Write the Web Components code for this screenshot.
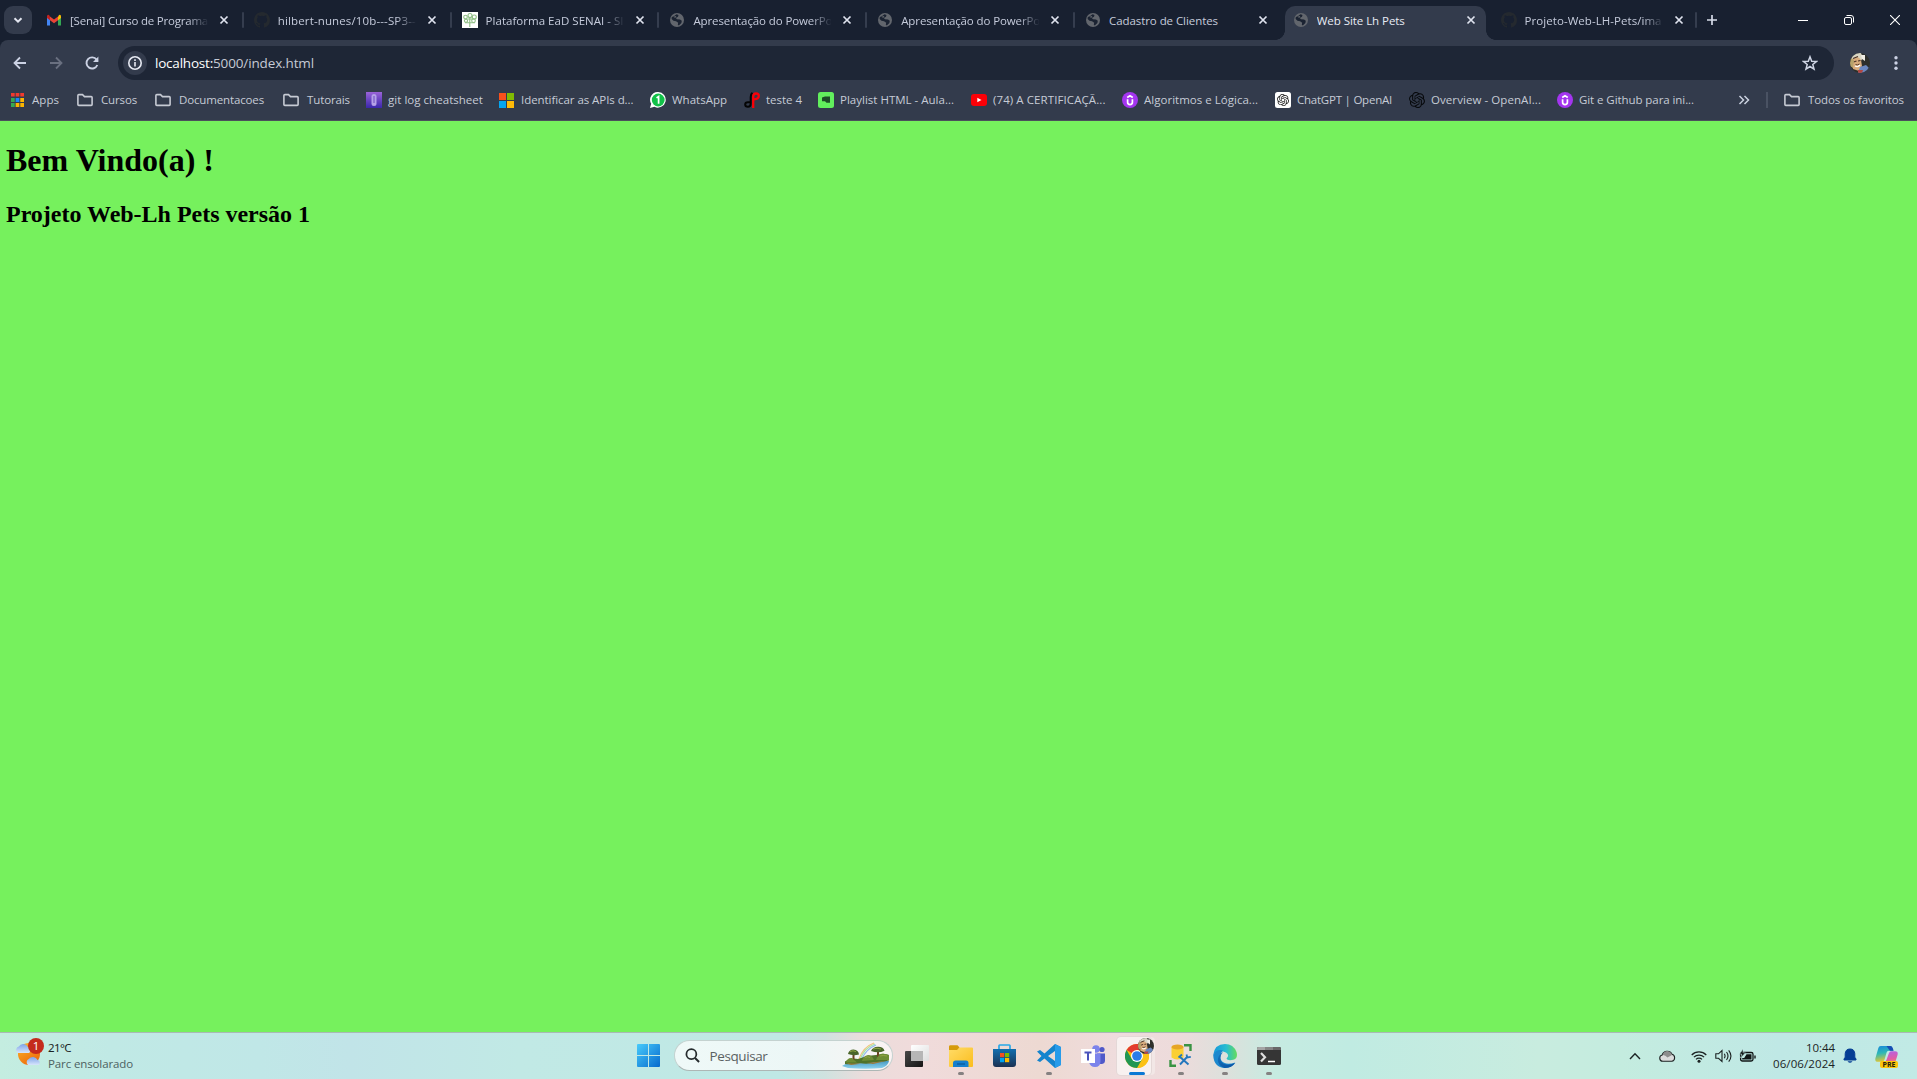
<!DOCTYPE html>
<html lang="pt-BR">
<head>
<meta charset="utf-8">
<title>Web Site Lh Pets</title>
<style>
html,body{margin:0;height:100%;overflow:hidden}
</style>
</head>
<body>
<desktop-screen></desktop-screen>
<script>
const KNOT = 'M22.2819 9.8211a5.9847 5.9847 0 0 0-.5157-4.9108 6.0462 6.0462 0 0 0-6.5098-2.9A6.0651 6.0651 0 0 0 4.9807 4.1818a5.9847 5.9847 0 0 0-3.9977 2.9 6.0462 6.0462 0 0 0 .7427 7.0966 5.98 5.98 0 0 0 .511 4.9107 6.051 6.051 0 0 0 6.5146 2.9001A5.9847 5.9847 0 0 0 13.2599 24a6.0557 6.0557 0 0 0 5.7718-4.2058 5.9894 5.9894 0 0 0 3.9977-2.9001 6.0557 6.0557 0 0 0-.7475-7.0729zm-9.022 12.6081a4.4755 4.4755 0 0 1-2.8764-1.0408l.1419-.0804 4.7783-2.7582a.7948.7948 0 0 0 .3927-.6813v-6.7369l2.02 1.1686a.071.071 0 0 1 .038.052v5.5826a4.504 4.504 0 0 1-4.4945 4.4944zm-9.6607-4.1254a4.4708 4.4708 0 0 1-.5346-3.0137l.142.0852 4.783 2.7582a.7712.7712 0 0 0 .7806 0l5.8428-3.3685v2.3324a.0804.0804 0 0 1-.0332.0615L9.74 19.9502a4.4992 4.4992 0 0 1-6.1408-1.6464zM2.3408 7.8956a4.485 4.485 0 0 1 2.3655-1.9728V11.6a.7664.7664 0 0 0 .3879.6765l5.8144 3.3543-2.0201 1.1685a.0757.0757 0 0 1-.071 0l-4.8303-2.7865A4.504 4.504 0 0 1 2.3408 7.872zm16.5963 3.8558L13.1038 8.364 15.1192 7.2a.0757.0757 0 0 1 .071 0l4.8303 2.7913a4.4944 4.4944 0 0 1-.6765 8.1042v-5.6772a.79.79 0 0 0-.407-.667zm2.0107-3.0231l-.142-.0852-4.7735-2.7818a.7759.7759 0 0 0-.7854 0L9.409 9.2297V6.8974a.0662.0662 0 0 1 .0284-.0615l4.8303-2.7866a4.4992 4.4992 0 0 1 6.6802 4.66zM8.3065 12.863l-2.02-1.1638a.0804.0804 0 0 1-.038-.0567V6.0742a4.4992 4.4992 0 0 1 7.3757-3.4537l-.142.0805L8.704 5.459a.7948.7948 0 0 0-.3927.6813zm1.0976-2.3654l2.602-1.4998 2.6069 1.4998v2.9994l-2.5974 1.4997-2.6067-1.4997Z';
const ICONS = {
  chevdown: ['0 0 16 16','<path d="M4.5 6.3 8 9.7l3.5-3.4" fill="none" stroke="#e3e6f0" stroke-width="2"/>'],
  gmail: ['0 0 16 16','<path d="M1 4v9.5h3V7z" fill="#4285f4"/><path d="M15 4v9.5h-3V7z" fill="#34a853"/><path d="M12 4.8 13 3q2-.8 2 1.6V6l-3 2.3z" fill="#fbbc04"/><path d="M4 8.3V4.4l4 3 4-3v3.9l-4 3z" fill="#ea4335"/><path d="M1 6V4.6Q1 2.200 3 3l1 1.500V8.300z" fill="#c5221f"/>'],
  github: ['0 0 16 16','<path fill="#24292f" d="M8 0C3.580 0 0 3.580 0 8c0 3.540 2.290 6.530 5.470 7.590.4.070.55-.170.55-.380v-1.490c-2.010.370-2.530-.490-2.690-.940-.09-.230-.480-.940-.820-1.130-.28-.150-.680-.520-.010-.530.63-.010 1.080.58 1.230.82.720 1.210 1.870.870 2.330.660.070-.520.280-.870.510-1.070-1.780-.2-3.640-.890-3.640-3.950 0-.870.310-1.590.820-2.150-.08-.2-.36-1.020.080-2.120 0 0 .67-.210 2.200.820a7.600 7.600 0 0 1 4 0c1.530-1.040 2.200-.820 2.200-.820.440 1.100.160 1.920.080 2.120.510.560.820 1.270.820 2.150 0 3.070-1.870 3.750-3.650 3.950.290.250.540.730.540 1.480v2.200c0 .210.150.460.550.380A8 8 0 0 0 16 8c0-4.420-3.580-8-8-8"/>'],
  senai: ['0 0 16 16','<path fill="#fff" d="M0 0h16v16H0z"/><g fill="none" stroke="#8fbf86" stroke-width="1.100"><circle cx="3.500" cy="5" r="1.800"/><circle cx="8" cy="3.500" r="2"/><circle cx="12.300" cy="5" r="2"/><circle cx="4" cy="8.800" r="1.600"/><circle cx="11.500" cy="8.700" r="1.800"/><path d="M7.800 5v10M3 10.800h10M5.500 7h5"/></g>'],
  globe: ['0 0 16 16','<circle cx="8" cy="8" r="7" fill="#62666d"/><path d="M7.600 2.300 9.500 3 9 4.700 6.800 6 8 7.200l3 .3 1.800 1.300-.4 2.200-2.600 2.600-1-.8.4-2.100L7 9.300 4.500 8.800 2.600 7 2.800 5l1.600-.5z" fill="#1b2332"/><path d="M5 4.600 6.800 4l.5 1-1.500 1z" fill="#62666d"/>'],
  close: ['0 0 10 10','<path d="M1.500 1.500l7 7M8.500 1.500l-7 7" stroke="#dfe3ee" stroke-width="1.700"/>'],
  plus: ['0 0 12 12','<path d="M6 1v10M1 6h10" stroke="#d6dbe8" stroke-width="1.700"/>'],
  min: ['0 0 10 10','<path d="M0 5.500h10" stroke="#fff"/>'],
  restore: ['0 0 10 10','<rect x=".5" y="2.500" width="7" height="7" rx="1.500" fill="none" stroke="#fff"/><path d="M2.500.5h4.500a2.500 2.500 0 0 1 2.500 2.500v4.500" fill="none" stroke="#fff"/>'],
  winclose: ['0 0 10 10','<path d="M0 0l10 10M10 0 0 10" stroke="#fff" stroke-width="1.100"/>'],
  back: ['0 0 16 16','<path d="M14 8H3M8 2.500 2.500 8 8 13.500" fill="none" stroke="#ccd2e4" stroke-width="1.800"/>'],
  fwd: ['0 0 16 16','<path d="M2 8h11M8 2.500 13.500 8 8 13.500" fill="none" stroke="#6a7080" stroke-width="1.800"/>'],
  reload: ['0 0 16 16','<path d="M13.300 10A5.600 5.600 0 1 1 12.600 4.600L13.500 6" fill="none" stroke="#ccd2e4" stroke-width="1.900"/><path d="M14.400 1.500v5.600H9z" fill="#ccd2e4"/>'],
  info: ['0 0 16 16','<circle cx="8" cy="8" r="6.200" fill="none" stroke="#e6e9f2" stroke-width="1.600"/><path d="M8 7v4.500M8 4.300v1.600" stroke="#e6e9f2" stroke-width="1.600"/>'],
  star: ['0 0 16 16','<path d="M8 1.800l1.700 4.400 4.700.3-3.600 3 1.200 4.600L8 11.500l-4 2.600 1.200-4.600-3.600-3 4.700-.3z" fill="none" stroke="#cfd5e4" stroke-width="1.500"/>'],
  avatar: ['0 0 20 20','<defs><clipPath id="a"><circle cx="10" cy="10" r="10"/></clipPath></defs><g clip-path="url(#a)"><path fill="#2e2f2b" d="M0 0h20v20H0z"/><path fill="#d9d5c3" d="M0 0h11l2 5-3 4-8-2z"/><path fill="#f0ede4" d="M11 2h4v6l-3-2z"/><path d="M2 7q5-6 9 0l1 6-3 5-6-2z" fill="#d9ac7e"/><path d="M3.500 9l3-1M8 8l2.500-.5M3 5.500l5-2" stroke="#493226" stroke-width="1.200"/><path d="M5 13q3 1.500 5-1" stroke="#fff" fill="none" stroke-width="1.300"/><path d="M5.500 11.500q2 1 4-.5" stroke="#5b3c28" fill="none"/><path d="M10 14l6-2 4 4v4H8z" fill="#6b87bf"/><path d="M8 17l5 0-1 3H8z" fill="#b24742"/><path d="M0 4l4 3-1 8-3-2z" fill="#b7a36b"/></g>'],
  dots: ['0 0 16 16','<g fill="#ccd2e4"><circle cx="8" cy="2.800" r="1.700"/><circle cx="8" cy="8" r="1.700"/><circle cx="8" cy="13.200" r="1.700"/></g>'],
  apps: ['0 0 14 14','<g><path fill="#f03a2e" d="M0 0h4v3.500H0zM5 0h4v3.500H5zM10 0h4v3.500h-4z"/><path fill="#34a853" d="M0 5h4v4H0zM0 10h4v4H0z"/><path fill="#1a86f8" d="M5 5h4v4H5z"/><path fill="#fbb500" d="M10 5h4v4h-4zM5 10h4v4H5zM10 10h4v4h-4z"/></g>'],
  folder: ['0 0 18 14','<path d="M1.900 2.500Q1.900 1.600 2.800 1.600h3.700l2 2h6.700q.9 0 .9.900v7q0 .9-.9.900H2.800q-.9 0-.9-.9z" fill="none" stroke="#c6cad3" stroke-width="1.600"/>'],
  gitlog: ['0 0 16 16','<defs><linearGradient id="g" x2="0" y2="1"><stop stop-color="#9a63d8"/><stop offset="1" stop-color="#3a27ab"/></linearGradient></defs><path fill="url(#g)" d="M0 0h16v16H0z"/><rect x="5.500" y="2" width="5" height="12" rx="2.500" fill="#b5a2e8"/><path d="M8 4v7" stroke="#6c4cc0"/>'],
  ms: ['0 0 15 15','<path fill="#f8501c" d="M0 0h7v7H0z"/><path fill="#80bb03" d="M8 0h7v7H8z"/><path fill="#05a5f0" d="M0 8h7v7H0z"/><path fill="#ffba08" d="M8 8h7v7H8z"/>'],
  whats: ['0 0 16 16','<path d="M8.200 0a7.800 7.800 0 1 1-3.700 14.800L0 16l1.200-4.200A7.800 7.800 0 0 1 8.200 0z" fill="#fff"/><circle cx="8.200" cy="8" r="6.400" fill="#12c149"/><path d="M6.500 5.900 8.600 4.500v7.200" fill="none" stroke="#fff" stroke-width="1.700"/>'],
  teste: ['0 0 16 16','<path d="M8.500.8Q6.700 2 6.700 5v6.500q0 3.300-2.700 3.300Q1.200 14.800 1.200 12.500T4 10.200h2" fill="none" stroke="#050505" stroke-width="2"/><path d="M9.200 16V4.500q0-3 2.800-3 2.800 0 2.800 2.500Q14.800 7 10 7.300" fill="none" stroke="#fb0007" stroke-width="2.300"/>'],
  playlist: ['0 0 16 16','<rect width="16" height="16" rx="2.500" fill="#62ef5d"/><path d="M4 5.500 7 4.600h5v6.200H8.500L7 9.300H4z" fill="#1d4d27"/>'],
  yt: ['0 0 16 16','<rect y="2" width="16" height="12" rx="3" fill="#fb0007"/><path d="M6.300 5.700 10.500 8l-4.200 2.300z" fill="#fff"/>'],
  udemy: ['0 0 16 16','<circle cx="8" cy="8" r="8" fill="#a435f0"/><path d="M5.600 7.200v3.100q0 2.300 2.400 2.300t2.400-2.300V7.200M5.200 5.400 8 3.700l2.800 1.700" fill="none" stroke="#fff" stroke-width="1.700"/>'],
  gpt: ['0 0 16 16','<rect width="16" height="16" rx="2.500" fill="#fff"/><path transform="translate(2 2) scale(.5)" fill="#1c1c1c" d="' + KNOT + '"/>'],
  openai: ['0 0 24 24','<path fill="#07090c" d="' + KNOT + '"/>'],
  more: ['0 0 12 12','<path d="M1.500 2 5.500 6l-4 4M6.500 2l4 4-4 4" fill="none" stroke="#ccd2e0" stroke-width="1.500"/>'],
  weather: ['0 0 28 28','<defs><linearGradient id="w" x2=".6" y2="1"><stop stop-color="#fbb72c"/><stop offset="1" stop-color="#ee6c0b"/></linearGradient><linearGradient id="c" x2="0" y2="1"><stop stop-color="#7da3e8"/><stop offset="1" stop-color="#d7e5fb"/></linearGradient></defs><circle cx="13" cy="12" r="11" fill="url(#w)"/><path d="M2 11a3.500 3.500 0 0 1 .8-6.500 5 5 0 0 1 9 .5A3.200 3.200 0 0 1 13 11z" fill="url(#c)"/><path d="M12 23a3.500 3.500 0 0 1 .8-6 5 5 0 0 1 8.700 1 2.700 2.700 0 0 1 1 5z" fill="url(#c)"/>'],
  win: ['0 0 23 23','<defs><linearGradient id="s" x2="1" y2="1"><stop stop-color="#48cbfb"/><stop offset="1" stop-color="#0669cd"/></linearGradient></defs><path fill="url(#s)" d="M0 1q0-1 1-1h10v11H0zM12 0h10q1 0 1 1v10H12zM0 12h11v11H1q-1 0-1-1zM12 12h11v10q0 1-1 1H12z"/>'],
  search: ['0 0 16 16','<circle cx="6.800" cy="6.600" r="5.300" fill="none" stroke="#262c2e" stroke-width="1.900"/><path d="M10.700 10.600l4.300 4.300" stroke="#262c2e" stroke-width="2.100"/>'],
  scene: ['0 0 48 27','<defs><linearGradient id="l" x2="0" y2="1"><stop stop-color="#3f91bb"/><stop offset="1" stop-color="#8cd3ef"/></linearGradient></defs><path d="M17 17Q21 5 32 1" fill="none" stroke="#f4c27c" stroke-width="1.200"/><path d="M18 17.500Q22 6 33 2" fill="none" stroke="#a7e3a4" stroke-width="1.200"/><path d="M19.500 17.500Q24 7 34 3" fill="none" stroke="#8fb7f0" stroke-width="1.300"/><path d="M0 24Q10 17 24 18t23 1q-1 5-7 7-16 1.500-34 0z" fill="url(#l)"/><path d="M3 19.500q5-4 13-2.500l9-3 9-1q8-2 13 0v5.500q-8 2-15 1.500-6 3-14 1-8 2-15 1z" fill="#4f7229"/><path d="M11.500 20V11M36 17V8" stroke="#6b4322" stroke-width="2"/><path d="M6 12q1-4.500 5.500-4.500Q16.500 8 17 12.500q-6 1.500-11-.5zM29 9q1.500-4 7-4.200 5.500.2 6.500 4-6 3-13.500.2z" fill="#4a652a"/><path d="M20 19q1-5 6-6 4 0 6 5zM34 18q2-6 7-6.500l6 1.500v5zM4 20.500q1-5 6-4.500l5 4.500z" fill="#6e8c34"/><path d="M4 21q12 1 20 0l20-2-13 3-6-1-16 2z" fill="#9b7a3b"/><path d="M8 9.500q3-1.500 6 0M31 7q4-1.500 8 0M23 15.500q3-1.500 5 0M38 14q3-1 7 0" stroke="#8fa343" fill="none"/>'],
  taskview: ['0 0 24 22','<defs><linearGradient id="d" x2="1" y2="1"><stop stop-color="#484848"/><stop offset="1" stop-color="#151515"/></linearGradient><linearGradient id="e" x2="1" y2="1"><stop stop-color="#fff"/><stop offset="1" stop-color="#dedede"/></linearGradient></defs><rect y="6" width="18" height="16" rx="1" fill="url(#d)"/><rect x="6" width="18" height="16" rx="1" fill="url(#e)"/><path d="M6 6h12v10H6z" fill="#b6b6b6"/>'],
  explorer: ['0 0 24 22','<defs><linearGradient id="f" x2="1" y2="1"><stop stop-color="#ffdc68"/><stop offset="1" stop-color="#fbbd1d"/></linearGradient></defs><path d="M0 1.500Q0 .2 1.500.2h7l2 2.300-2 3H0z" fill="#d69b0b"/><path d="M0 5h8l2.500-2.500H23q1 0 1 1V21q0 1-1 1H1q-1 0-1-1z" fill="url(#f)"/><path d="M4 22v-4q0-2.500 2.500-2.500h10.500Q19.500 15.500 19.500 18v4z" fill="#157fcd"/><path d="M8 19h8" stroke="#0b5a9c" stroke-width="1.300"/>'],
  store: ['0 0 23 23','<defs><linearGradient id="t" x2="0" y2="1"><stop stop-color="#126fb0"/><stop offset="1" stop-color="#1b3152"/></linearGradient></defs><path d="M6 6V1.700Q6 1 6.700 1h9.600q.7 0 .7.700V6" fill="none" stroke="#28a8e8" stroke-width="1.700"/><path d="M0 5h23v15q0 3-3 3H3q-3 0-3-3z" fill="url(#t)"/><path fill="#f25022" d="M7 9h4.200v4.200H7z"/><path fill="#7fba00" d="M12 9h4.200v4.200H12z"/><path fill="#00a4ef" d="M7 14h4.200v4.200H7z"/><path fill="#ffb900" d="M12 14h4.200v4.200H12z"/>'],
  vscode: ['0 0 24 24','<path d="M18 0 7.500 9.600 3 6 0 7.600 4.500 12 0 16.400 3 18l4.500-3.600L18 24l6-3V3zM18 7v10l-7-5z" fill="#1584cd"/><path d="M18 0l6 3v18l-6 3z" fill="#279bea"/>'],
  teams: ['0 0 24 22','<circle cx="15" cy="4" r="3.800" fill="#7b83eb"/><circle cx="21" cy="4.500" r="2.600" fill="#5059c9"/><path d="M16 8.500h8v7q0 3-3 3.500h-3z" fill="#5059c9"/><path d="M8 8.500h11.500V16q0 6-5.500 6-5 0-6-5z" fill="#7b83eb"/><path d="M0 4h14v14H0z" fill="#fff"/><path d="M3.500 7.500h7M7 7.500v8" stroke="#4b53bc" stroke-width="2"/>'],
  chrome: ['0 0 48 48','<circle cx="24" cy="24" r="24" fill="#fbbc04"/><path d="M24 24 3.200 12A24 24 0 0 1 44.800 12H24z" fill="#e33b2e"/><path d="M24 12h20.800A24 24 0 0 1 24 48l10.400-18z" fill="#fbc115"/><path d="M3.200 12A24 24 0 0 0 24 48l10.400-18L24 34l-10.400-4z" fill="#219653"/><circle cx="24" cy="24" r="12" fill="#fff"/><circle cx="24" cy="24" r="9.700" fill="#2a7de9"/>'],
  tools: ['0 0 23 23','<path d="M15 1.200h6.500V7M1.500 16v5.700H7" fill="none" stroke="#399343" stroke-width="2.400"/><path d="M2.500 3v10.500q5.500 4 12 0V3z" fill="#fbcf34"/><ellipse cx="8.500" cy="3" rx="6" ry="2.500" fill="#e6a526"/><path d="M10.500 12.500l9 8M11 20.500l7.500-8" stroke="#2577bd" stroke-width="1.900"/><path d="M9.500 13.500l3.500-3M17.500 10.500l.8 3 3.500-.6" stroke="#2577bd" stroke-width="1.800" fill="none"/>'],
  edge: ['0 0 24 24','<defs><linearGradient id="h" x2="1"><stop stop-color="#1597db"/><stop offset=".55" stop-color="#28bdd0"/><stop offset="1" stop-color="#65dc5c"/></linearGradient><linearGradient id="i" x2=".7" y2="1"><stop stop-color="#1377bf"/><stop offset="1" stop-color="#0c54a5"/></linearGradient></defs><path d="M.2 11Q1.500 0 12 0q8.500.2 11.500 8 2 6.800-4.500 8-5 .6-5.500-1.500 3.500-3.500-.5-6Q5 4.500.2 11z" fill="url(#h)"/><path d="M.2 11Q3.500 4.500 10 6.500 6 11 8 16q4 6 14.300 2.500Q18.500 24 12 24 .8 23.500.2 11z" fill="#1b88ce"/><path d="M10 8Q5.500 13 8.500 18q4 5 13.800 1-4 5.300-11 4.900Q4 21 5 14.500 6 10 10 8z" fill="url(#i)"/>'],
  term: ['0 0 24 18','<rect width="24" height="18" rx="1.500" fill="#353535"/><path d="M0 1.500Q0 0 1.500 0H8v3H0z" fill="#a5a5a5"/><path d="M8 0h8v3H8z" fill="#858585"/><path d="M16 0h6.500Q24 0 24 1.500V3h-8z" fill="#686868"/><path d="M4 6l4 4.200L4 14.400" fill="none" stroke="#ddd" stroke-width="2.200"/><path d="M11 14.500h7" stroke="#fff" stroke-width="1.500"/>'],
  up: ['0 0 12 8','<path d="M1 7l5-5.300L11 7" fill="none" stroke="#1c2424" stroke-width="1.400"/>'],
  cloud: ['0 0 17 12','<path d="M3.700 11.300A3.200 3.200 0 0 1 3.200 5 5.300 5.300 0 0 1 13 4.300a3.600 3.600 0 0 1-.3 7z" fill="#dcdcdc" stroke="#1b2222" stroke-width="1.100"/><path d="M3.500 5Q5 1 8.500 1.100 12 1.500 13 5l-4.500 2.500Q6 4.500 3.500 5z" fill="#8d8d8d"/>'],
  wifi: ['0 0 16 13','<g fill="none" stroke="#1b2222" stroke-width="1.200"><path d="M.7 5a10.300 10.300 0 0 1 14.600 0M2.900 7.200a7.200 7.200 0 0 1 10.200 0M5 9.300a4.200 4.200 0 0 1 6 0"/></g><circle cx="8" cy="11.300" r="1.500" fill="#1b2222"/>'],
  sound: ['0 0 17 14','<g fill="none" stroke="#1b2222" stroke-width="1.100"><path d="M.8 4.800h2.700L7 1.500v11L3.500 9.300H.8z"/><path d="M9.300 4.800q1.500 2.200 0 4.500M11.500 3q3 4 0 8M13.700 1.300q4.500 5.700 0 11.400"/></g>'],
  batt: ['0 0 17 14','<rect x="1.600" y="3.500" width="12.400" height="8.500" rx="1.800" fill="none" stroke="#101616" stroke-width="1.300"/><path d="M3.200 10.500V9h2L7.500 5.200h5v5.300z" fill="#101616"/><path d="M16 6.500v3" stroke="#101616" stroke-width="1.400"/><path d="M4 0 .5 5.200h2.300L1.500 9 6.500 3.800H4z" fill="#101616" stroke="#c3e9e4" stroke-width=".5"/>'],
  bell: ['0 0 14 16','<path d="M1 12V11l1.200-1.800V5.700Q2.500 1 7 1t4.800 4.700v3.500L13 11v1z" fill="#053e94" stroke="#053e94"/><path d="M4.500 13.300q2.500 3 5 0z" fill="#053e94"/>'],
  copilot: ['0 0 24 24','<defs><linearGradient id="j" x2=".2" y2="1"><stop stop-color="#1787db"/><stop offset=".5" stop-color="#2db8b6"/><stop offset="1" stop-color="#dbc63a"/></linearGradient><linearGradient id="k" x2=".2" y2="1"><stop stop-color="#ad63ee"/><stop offset=".6" stop-color="#e05da5"/><stop offset="1" stop-color="#f68f59"/></linearGradient></defs><path d="M6 1h9.500q2 0 2.500 2l1 3h-4.500q-2 0-2.500 2l-2 7q-1 2.500-3 2.500H3q-3.500 0-2.500-4L3.500 3Q4 1 6 1z" fill="url(#j)"/><path d="M12 1h4q2 0 2.500 2l1 3h-4z" fill="#164eb4"/><path d="M17 6.500h4q3.500 0 2.500 4l-3 9.500q-.7 2-2.500 2h-8q-2-.2-2.500-2l-.7-2.500h2.700q2 0 2.500-2l2.500-7q.7-2 2.500-2z" fill="url(#k)"/>']
};

class UiIcon extends HTMLElement {
  connectedCallback() {
    if (this.shadowRoot) return;
    const [vb, body] = ICONS[this.getAttribute('name')];
    const w = this.getAttribute('w') || 16, h = this.getAttribute('h') || w;
    this.attachShadow({mode: 'open'}).innerHTML =
      `<style>:host{display:block;flex:none;width:${w}px;height:${h}px}svg{display:block;width:100%;height:100%}</style>
       <svg viewBox="${vb}" preserveAspectRatio="none" aria-hidden="true">${body}</svg>`;
  }
}
customElements.define('ui-icon', UiIcon);

/* A single line of text whose tracking is adjusted so that it spans exactly w pixels. */
class FitText extends HTMLElement {
  connectedCallback() {
    if (this.shadowRoot) return;
    const w = +this.getAttribute('w');
    this.attachShadow({mode: 'open'}).innerHTML =
      `<style>:host{display:block;flex:none;width:${w}px;white-space:nowrap}span{display:inline-block;white-space:pre}</style><span><slot></slot></span>`;
    const span = this.shadowRoot.querySelector('span');
    const n = this.textContent.length;
    span.style.letterSpacing = (w - span.getBoundingClientRect().width) / n + 'px';
  }
}
customElements.define('fit-text', FitText);

class BrowserTab extends HTMLElement {
  connectedCallback() {
    const a = n => this.getAttribute(n);
    this.attachShadow({mode: 'open'}).innerHTML = `<style>
      :host{display:flex;flex:none;box-sizing:border-box;width:207.800px;height:40px;padding-top:6px;color:#c5cbdb;font-size:11.500px}
      .in{display:flex;align-items:center;width:201px;margin-left:2.500px;padding-left:7.500px;box-sizing:border-box;height:34px;position:relative;padding-bottom:6px}
      .t{width:138px;margin:0 11px 0 8px;overflow:hidden;line-height:20px;padding-top:2px}
      .fade{-webkit-mask-image:linear-gradient(90deg,#000 118px,transparent 139px);mask-image:linear-gradient(90deg,#000 118px,transparent 139px)}
      .sep{width:2px;height:16px;margin:6px 0 0 3px;background:#353d4e;border-radius:1px}
      :host([active]) .in{background:#333b4c;border-radius:10px 10px 0 0}
      :host([active]){color:#e8ebf4}
      :host([active]) .in::before,:host([active]) .in::after{content:"";position:absolute;bottom:0;width:10px;height:10px}
      :host([active]) .in::before{left:-10px;background:radial-gradient(circle at 0 0,transparent 9.600px,#333b4c 10.200px)}
      :host([active]) .in::after{right:-10px;background:radial-gradient(circle at 100% 0,transparent 9.600px,#333b4c 10.200px)}
      :host([nosep]) .sep,:host([active]) .sep{visibility:hidden}
    </style>
    <div class="in"><ui-icon name="${a('icon')}"></ui-icon>
      <div class="t ${this.hasAttribute('fade') ? 'fade' : ''}"><fit-text w="${a('w')}">${a('label')}</fit-text></div>
      <ui-icon name="close" w="10"></ui-icon></div><div class="sep"></div>`;
  }
}
customElements.define('browser-tab', BrowserTab);

class TabStrip extends HTMLElement {
  connectedCallback() {
    this.attachShadow({mode: 'open'}).innerHTML = `<style>
      :host{display:flex;height:40px;background:#182030;align-items:center}
      .menu{width:28px;height:28px;border-radius:9px;background:#333b4c;margin:0 4px;display:flex;align-items:center;justify-content:center}
      .new{margin-left:9px}
      .last{width:206.500px}
      .win{margin-left:auto;display:flex;gap:36px;margin-right:17px}
    </style>
    <div class="menu"><ui-icon name="chevdown"></ui-icon></div>
    <browser-tab icon="gmail" w="138" fade label="[Senai] Curso de Programa"></browser-tab>
    <browser-tab icon="github" w="138" fade label="hilbert-nunes/10b---SP3--"></browser-tab>
    <browser-tab icon="senai" w="138" fade label="Plataforma EaD SENAI - SI"></browser-tab>
    <browser-tab icon="globe" w="139" fade label="Apresentação do PowerPo"></browser-tab>
    <browser-tab icon="globe" w="139" fade label="Apresentação do PowerPo"></browser-tab>
    <browser-tab icon="globe" w="109" nosep label="Cadastro de Clientes"></browser-tab>
    <browser-tab icon="globe" w="88" active label="Web Site Lh Pets"></browser-tab>
    <browser-tab class="last" icon="github" w="137" fade label="Projeto-Web-LH-Pets/ima"></browser-tab>
    <ui-icon class="new" name="plus" w="12"></ui-icon>
    <div class="win"><ui-icon name="min" w="10"></ui-icon><ui-icon name="restore" w="10"></ui-icon><ui-icon name="winclose" w="10"></ui-icon></div>`;
  }
}
customElements.define('tab-strip', TabStrip);

class AddressBar extends HTMLElement {
  connectedCallback() {
    this.attachShadow({mode: 'open'}).innerHTML = `<style>
      :host{display:flex;height:46px;align-items:center;padding:0 13px 0 12px;box-sizing:border-box}
      .nav{display:flex;gap:20px}
      .omni{display:flex;align-items:center;box-sizing:border-box;width:1716px;height:34px;border-radius:17px;background:#1e2636;margin:0 16px 0 18px;padding:0 16px 0 5px;font-size:13.500px;color:#c5cad5}
      .site{width:24px;height:24px;border-radius:50%;background:#333b4c;display:flex;align-items:center;justify-content:center;margin-right:8px}
      .url{display:flex}.host{color:#fff}
      .star{margin-left:auto}.dots{margin-left:auto}
    </style>
    <div class="nav"><ui-icon name="back"></ui-icon><ui-icon name="fwd"></ui-icon><ui-icon name="reload"></ui-icon></div>
    <div class="omni"><div class="site"><ui-icon name="info"></ui-icon></div>
      <div class="url"><fit-text class="host" w="58">localhost:</fit-text><fit-text w="101">5000/index.html</fit-text></div>
      <ui-icon class="star" name="star"></ui-icon></div>
    <ui-icon name="avatar" w="20"></ui-icon><ui-icon class="dots" name="dots"></ui-icon>`;
  }
}
customElements.define('address-bar', AddressBar);

class BookmarkItem extends HTMLElement {
  connectedCallback() {
    const a = n => this.getAttribute(n), s = (a('size') || '16,16').split(',');
    this.attachShadow({mode: 'open'}).innerHTML = `<style>
      :host{display:flex;flex:none;align-items:center;width:${a('span')}px;gap:${a('gap') || 6}px;height:20px}
      fit-text{line-height:20px}
    </style><ui-icon name="${a('icon')}" w="${s[0]}" h="${s[1]}"></ui-icon><fit-text w="${a('w')}">${a('label')}</fit-text>`;
  }
}
customElements.define('bookmark-item', BookmarkItem);

class BookmarksBar extends HTMLElement {
  connectedCallback() {
    const items = [
      ['apps',65,27,'Apps',8,'13,14'],['folder',78,36,'Cursos',7,'18,14'],['folder',128,85,'Documentacoes',7,'18,14'],
      ['folder',84,43,'Tutorais',7,'18,14'],['gitlog',133,95,'git log cheatsheet'],['ms',151,112.5,'Identificar as APIs d...',7,'15,15'],
      ['whats',94,55,'WhatsApp'],['teste',74,36,'teste 4'],['playlist',153,114,'Playlist HTML - Aula...'],
      ['yt',151,112.5,'(74) A CERTIFICAÇÃ...'],['udemy',153,114,'Algoritmos e Lógica...'],['gpt',134,95,'ChatGPT | OpenAI'],
      ['openai',148,110,'Overview - OpenAI...'],['udemy',181,115,'Git e Github para ini...']];
    this.attachShadow({mode: 'open'}).innerHTML = `<style>
      :host{display:flex;height:34px;box-sizing:border-box;padding:0 0 6px 11px;align-items:center;font-size:11.500px;color:#c6cbd6;border-bottom:1px solid #4b4f5b}
      .sep{width:2px;height:16px;margin:0 15px 0 16px;background:#4a5263}
      ui-icon{flex:none}
    </style>
    ${items.map(([i, s, w, l, g, z]) => `<bookmark-item icon="${i}" span="${s}" w="${w}" label="${l}" ${g ? `gap="${g}"` : ''} ${z ? `size="${z}"` : ''}></bookmark-item>`).join('')}
    <ui-icon name="more" w="12"></ui-icon><div class="sep"></div>
    <bookmark-item icon="folder" span="130" w="96" gap="7" size="18,14" label="Todos os favoritos"></bookmark-item>`;
  }
}
customElements.define('bookmarks-bar', BookmarksBar);

class PageView extends HTMLElement {
  connectedCallback() {
    this.attachShadow({mode: 'open'}).innerHTML = `<style>
      :host{display:block;flex:1;background:#76f15d;color:#000;font-family:"Liberation Serif","Times New Roman",serif;font-size:16px;padding:0 6px;overflow:hidden}
      h1{font-size:32px;margin:21px 0;line-height:37px}h2{font-size:24px;margin:0;line-height:28px}
    </style><h1><fit-text w="208">Bem Vindo(a) !</fit-text></h1><h2><fit-text w="304">Projeto Web-Lh Pets versão 1</fit-text></h2>`;
  }
}
customElements.define('page-view', PageView);

class TaskbarApp extends HTMLElement {
  connectedCallback() {
    const a = n => this.getAttribute(n), s = a('size').split(',');
    this.attachShadow({mode: 'open'}).innerHTML = `<style>
      :host{display:flex;flex:none;flex-direction:column;align-items:center;width:44px;height:46px;position:relative}
      .pic{height:40px;width:38px;display:flex;align-items:center;justify-content:center;margin-top:3px;box-sizing:border-box;padding-bottom:1px}
      .mark{position:absolute;top:39px;width:6px;height:3px;border-radius:2px;background:#858181}
      :host([active]) .mark{width:16px;background:#0a78d4;left:14px}
      :host([active]) .pic{background:#f8f1f0;border-radius:4px;width:34px;margin-right:5px;box-shadow:0 0 0 1px #e4d8d7,4px 0 0 0 #f2e7e6;height:38px;margin-top:4px}
      :host([active]) .pic>ui-icon{margin-left:5px}
      .who{position:absolute;left:23px;top:5px}
      :host(:not([open]):not([active])) .mark{display:none}
    </style><div class="pic"><ui-icon name="${a('icon')}" w="${s[0]}" h="${s[1]}"></ui-icon></div><div class="mark"></div>
    ${this.hasAttribute('active') ? '<ui-icon class="who" name="avatar" w="16"></ui-icon>' : ''}`;
  }
}
customElements.define('taskbar-app', TaskbarApp);

class TaskBar extends HTMLElement {
  connectedCallback() {
    this.attachShadow({mode: 'open'}).innerHTML = `<style>
      :host{display:flex;box-sizing:border-box;height:47px;border-top:1px solid #a9b9b5;color:#1b2424;font-size:11.500px;
        background:linear-gradient(90deg,#c4ede0 0,#c0e9e5 110px,#c0e7e7 260px,#c1e4e8 350px,#c1e9e5 520px,#bfe8e5 780px,#cfe2df 825px,#ecdcdb 865px,#f0dbdb 920px,#edd9d2 1040px,#efdcdd 1120px,#eddbdb 1180px,#dbe1dc 1230px,#c6ebe1 1275px,#c0ebe2 1350px,#c8ecdf 1540px,#c4ecdf 1620px,#bfe8e5 1780px,#c1eae5 1917px)}
      .weather{display:flex;width:620px;padding:4px 0 0 16px;position:relative;box-sizing:border-box}
      .weather>ui-icon{margin-top:5px}
      .badge{position:absolute;left:28px;top:5px;width:16px;height:16px;border-radius:50%;background:#c42b1c;color:#fff;text-align:center;line-height:16px;font-size:11.500px}
      .lines{display:flex;flex-direction:column;margin-left:4px;line-height:16px;padding-top:3px}.lines>:last-child{color:#4c6161}
      .lines>:first-child{font-family:"Noto Sans",sans-serif}
      .search{display:flex;align-items:center;box-sizing:border-box;width:219px;height:31px;border-radius:16px;background:linear-gradient(90deg,#eff9f8,#ecf7f6 60%,#faf3f3);border:1px solid #c4d2d0;border-bottom-color:#adb7b5;margin:7px 3px 0 -2px;padding-left:10px;font-size:13.500px;color:#5b6263}
      .search fit-text{margin-left:10px;padding-top:1px}.search .scene{margin-left:auto;margin-right:2px}
      .apps{display:flex;margin-left:-1px}
      .tray{display:flex;align-items:center;margin-left:auto;height:46px}
      .clock{display:flex;flex-direction:column;align-items:flex-end;line-height:16px;margin:0 8px 0 17px}
      .cop{position:relative;margin:0 19px 0 18px}
      .pre{position:absolute;left:5px;top:16px;width:18px;height:7px;line-height:7px;background:#fdc50c;border-radius:2px;font-size:7px;font-weight:bold;color:#26210a;text-align:center}
    </style>
    <div class="weather"><ui-icon name="weather" w="28"></ui-icon><div class="badge">1</div>
      <div class="lines"><fit-text w="23">21°C</fit-text><fit-text w="85">Parc ensolarado</fit-text></div></div>
    <taskbar-app icon="win" size="23,23" style="width:54px;margin-left:1.500px"></taskbar-app>
    <div class="search"><ui-icon name="search" w="15"></ui-icon><fit-text w="58">Pesquisar</fit-text><ui-icon class="scene" name="scene" w="48" h="27"></ui-icon></div>
    <div class="apps">
      <taskbar-app icon="taskview" size="24,22"></taskbar-app>
      <taskbar-app icon="explorer" size="24,22" open></taskbar-app>
      <taskbar-app icon="store" size="23,23"></taskbar-app>
      <taskbar-app icon="vscode" size="24,24" open></taskbar-app>
      <taskbar-app icon="teams" size="24,22"></taskbar-app>
      <taskbar-app icon="chrome" size="24,24" active></taskbar-app>
      <taskbar-app icon="tools" size="23,23" open></taskbar-app>
      <taskbar-app icon="edge" size="24,24" open></taskbar-app>
      <taskbar-app icon="term" size="24,18" open></taskbar-app>
    </div>
    <div class="tray">
      <ui-icon name="up" w="12" h="8" style="margin-right:18px"></ui-icon>
      <ui-icon name="cloud" w="17" h="12" style="margin-right:15px"></ui-icon>
      <ui-icon name="wifi" w="16" h="13" style="margin-right:8px"></ui-icon>
      <ui-icon name="sound" w="17" h="14" style="margin-right:7px"></ui-icon>
      <ui-icon name="batt" w="17" h="14" style="margin-top:-1px"></ui-icon>
      <div class="clock"><fit-text w="29">10:44</fit-text><fit-text w="62">06/06/2024</fit-text></div>
      <ui-icon name="bell" w="14" h="16"></ui-icon>
      <div class="cop"><ui-icon name="copilot" w="23"></ui-icon><div class="pre">PRE</div></div>
    </div>`;
  }
}
customElements.define('task-bar', TaskBar);

class DesktopScreen extends HTMLElement {
  connectedCallback() {
    this.attachShadow({mode: 'open'}).innerHTML = `<style>
      :host{display:flex;flex-direction:column;width:1917px;height:1079px;overflow:hidden;font-family:"Open Sans","Noto Sans",sans-serif;background:#182030}
      .chrome{background:#333b4c;border-radius:8px 8px 0 0;height:81px}
    </style><tab-strip></tab-strip><div class="chrome"><address-bar></address-bar><bookmarks-bar style="height:35px"></bookmarks-bar></div>
    <page-view></page-view><task-bar></task-bar>`;
  }
}
customElements.define('desktop-screen', DesktopScreen);
</script>
</body>
</html>
